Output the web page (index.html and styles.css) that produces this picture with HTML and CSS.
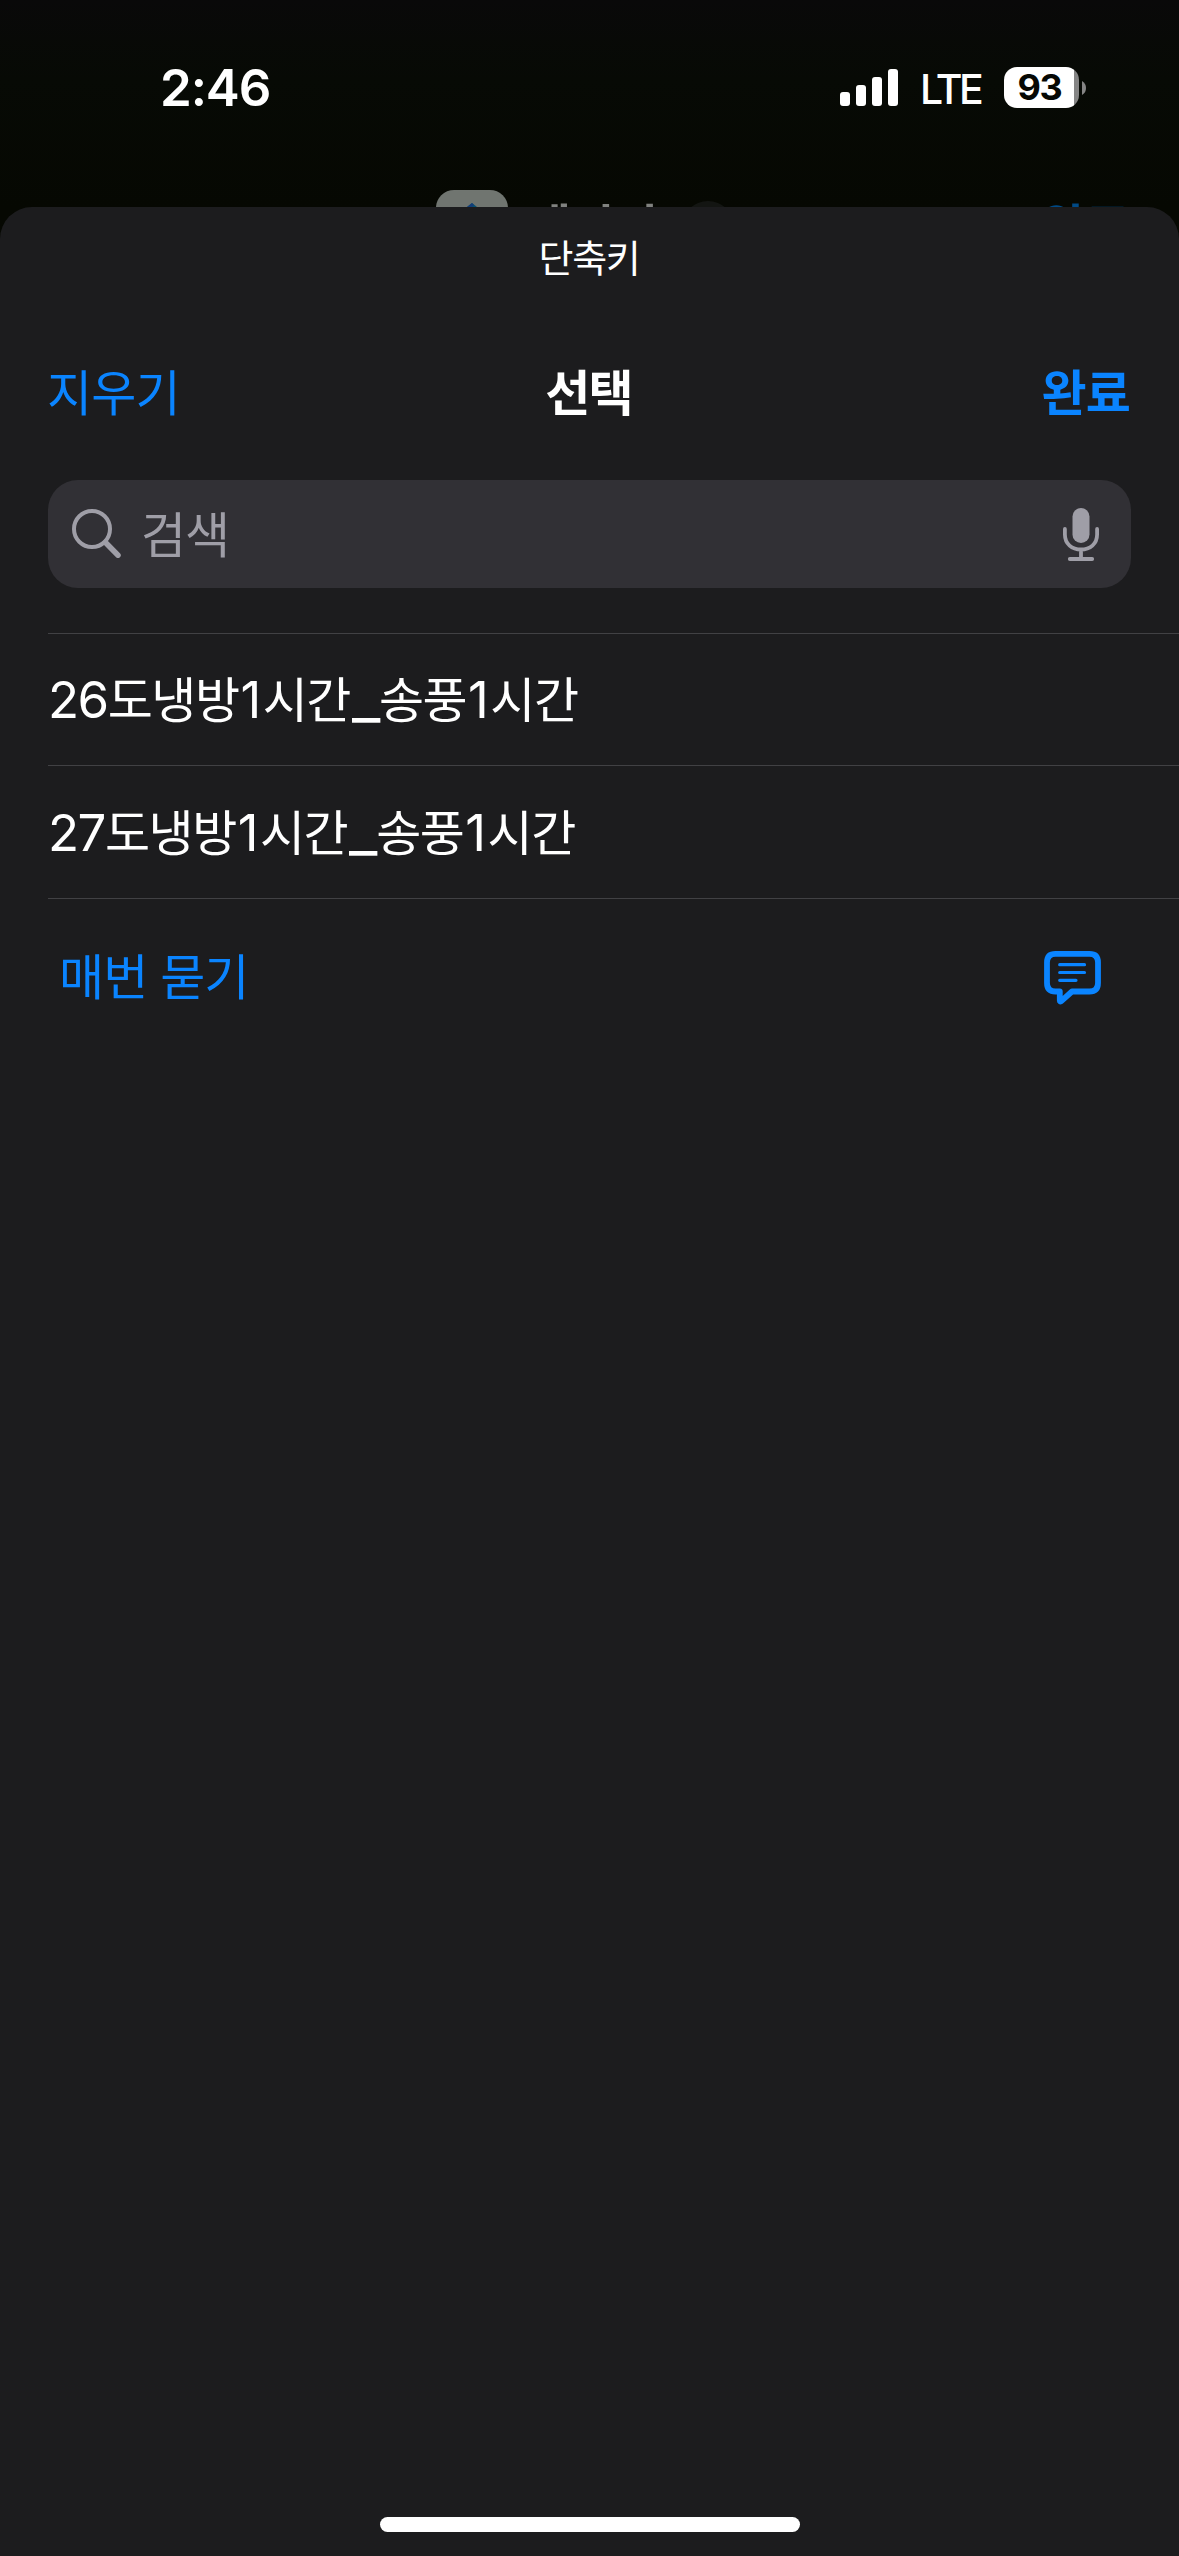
FILE: index.html
```html
<!DOCTYPE html>
<html lang="ko">
<head>
<meta charset="utf-8">
<title>단축키</title>
<link rel="stylesheet" href="styles.css">
</head>
<body>
<div class="screen">
  <header class="status">
    <time class="clock">2:46</time>
    <div class="indicators">
      <svg class="signal" width="58" height="38" viewBox="0 0 58 38" fill="#fff">
        <rect x="0" y="23" width="10" height="14" rx="3"/>
        <rect x="16" y="16" width="10" height="21" rx="3"/>
        <rect x="32" y="8" width="10" height="29" rx="3"/>
        <rect x="48" y="0" width="10" height="37" rx="3"/>
      </svg>
      <span class="network">LTE</span>
      <div class="battery">
        <div class="battery-body">93</div>
        <svg width="4" height="14" viewBox="0 0 4 14"><path d="M0 0C3 2 4 4 4 7S3 12 0 14Z" fill="#858585"/></svg>
      </div>
    </div>
  </header>
  <div class="backdrop">
    <div class="backdrop-icon"><svg width="20" height="20" viewBox="0 0 20 20"><path d="M10 0L20 8V20H0V8Z" fill="#08506f"/><path d="M10 0L0 8H7L12 2Z" fill="#123c78"/></svg></div>
    <span class="backdrop-title">메시지</span>
    <span class="backdrop-dot"></span>
    <span class="backdrop-done">완료</span>
  </div>
  <main class="sheet">
    <p class="prompt">단축키</p>
    <nav class="bar">
      <a class="clear">지우기</a>
      <h1 class="title">선택</h1>
      <a class="done">완료</a>
    </nav>
    <div class="search">
      <svg class="glass" width="50" height="50" viewBox="0 0 50 50" fill="none" stroke="#9f9ea7" stroke-linecap="round">
        <circle cx="20" cy="20" r="18" stroke-width="4"/>
        <path d="M33.500 33.500L46 46.200" stroke-width="5.500"/>
      </svg>
      <span class="placeholder">검색</span>
      <svg class="mic" width="36" height="54" viewBox="0 0 36 54" fill="none" stroke="#9f9ea7" stroke-width="3.800" stroke-linecap="round">
        <rect x="9.500" y="1" width="17" height="35" rx="8.500" fill="#9f9ea7" stroke="none"/>
        <path d="M1.900 22V27.500C1.900 37 9 42.500 18 42.500S34.100 37 34.100 27.500V22M18 42.500V51M6.800 52H29.200"/>
      </svg>
    </div>
    <ul class="list">
      <li class="row"><span class="num">26</span>도냉방<span class="num one">1</span>시간<span class="num underscore">_</span>송풍<span class="num one">1</span>시간</li>
      <li class="row"><span class="num">27</span>도냉방<span class="num one">1</span>시간<span class="num underscore">_</span>송풍<span class="num one">1</span>시간</li>
    </ul>
    <div class="ask">
      <span class="ask-label">매번 묻기</span>
      <svg width="58" height="54" viewBox="0 0 58 54" fill="none" stroke="#0a84ff" stroke-linecap="round" stroke-linejoin="round">
        <path d="M11.500 2.900H45.500Q54 2.900 54 11.400V32Q54 40.500 45.500 40.500H28L17 50.300Q15.800 51 15.800 49.500V40.500H11.500Q3 40.500 3 32V11.400Q3 2.900 11.500 2.900Z" stroke-width="5.800"/>
        <path d="M15.700 13.700H40.500M15.700 21.500H40.500M15.700 29.300H32" stroke-width="3.200"/>
      </svg>
    </div>
    <div class="home"></div>
  </main>
</div>
</body>
</html>
```
FILE: styles.css
```css
* { box-sizing: border-box; margin: 0; padding: 0; }
body { background: #060804; font-family: Inter, "Noto Sans CJK KR", sans-serif; color: #fff; }
.screen { width: 1179px; height: 2556px; display: flex; flex-direction: column; overflow: hidden; background: linear-gradient(#090909 0, #070a05 80px, #060802 207px); }
.status { height: 190px; flex: none; display: flex; justify-content: space-between; padding: 0 93px 0 160px; }
.clock { font-size: 51px; font-weight: 600; line-height: 62px; margin-top: 57px; letter-spacing: -1.1px; }
.indicators { display: flex; align-items: flex-start; }
.signal { margin-top: 69px; }
.network { font-size: 41px; font-weight: 500; line-height: 50px; margin: 64px 0 0 22px; width: 84px; letter-spacing: -3.5px; }
.battery { display: flex; align-items: center; gap: 3px; height: 41px; margin-top: 67px; }
.battery-body { width: 75px; height: 41px; padding-right: 4px; border-radius: 13px; background: linear-gradient(90deg, #fff 70px, #858585 70px); color: #060804; font-size: 36px; font-weight: 700; line-height: 41px; text-align: center; letter-spacing: -1.2px; }
.backdrop { height: 17px; flex: none; display: flex; overflow: hidden; padding: 0 48px 0 436px; }
.backdrop-icon { width: 72px; height: 72px; flex: none; border-radius: 18px; background: #707570; display: flex; justify-content: center; padding-top: 13px; }
.backdrop-title { width: 146px; margin-left: 18px; font: 700 49px/68px "Noto Sans CJK KR", sans-serif; color: #80827f; letter-spacing: -1.5px; white-space: nowrap; }
.backdrop-dot { width: 52px; height: 52px; flex: none; border-radius: 26px; background: #131512; margin: 11px 0 0 10px; }
.backdrop-done { margin-left: auto; font: 700 49px/68px "Noto Sans CJK KR", sans-serif; color: #004a86; letter-spacing: -1px; margin-right: 2px; white-space: nowrap; }
.sheet { flex: 1; display: flex; flex-direction: column; background: #1c1c1e; border-radius: 32px 32px 0 0; }
.prompt { height: 104px; padding-right: 1px; text-align: center; font: 400 38px/98px "Noto Sans CJK KR", sans-serif; letter-spacing: -1.3px; }
.bar { height: 169px; display: grid; grid-template-columns: 1fr 1fr 1fr; padding: 0 49px 0 47px; font: 400 49px/157px "Noto Sans CJK KR", sans-serif; }
.clear, .done { color: #0a84ff; letter-spacing: -0.8px; }
.title { font-size: 49px; font-weight: 700; text-align: center; letter-spacing: -1.8px; }
.done { font-weight: 700; text-align: right; }
.search { height: 108px; margin: 0 48px; border-radius: 30px; background: #313035; color: #9f9ea7; display: flex; align-items: center; padding: 0 32px 0 24px; }
.placeholder { flex: 1; margin-left: 19px; font: 400 49px/108px "Noto Sans CJK KR", sans-serif; height: 113px; letter-spacing: -1px; }
.list { list-style: none; margin: 45px 0 0 48px; border-top: 1px solid #414144; }
.row { height: 132px; display: flex; border-bottom: 1px solid #414144; font: 400 49px/126px "Noto Sans CJK KR", sans-serif; letter-spacing: -1.5px; }
.row + .row { height: 133px; padding-top: 1px; }
.num { font-family: Inter, sans-serif; font-size: 51px; line-height: 131px; }
.one { margin: 0 3px 0 2px; }
.underscore { width: 29px; font-weight: 500; transform: translateX(2px) scaleX(1.2); transform-origin: left; }
.ask { display: flex; justify-content: space-between; align-items: center; height: 158px; padding: 0 77px 0 59px; color: #0a84ff; font: 400 49px/156px "Noto Sans CJK KR", sans-serif; letter-spacing: -0.9px; }
.ask-label { height: 164px; }
.home { width: 420px; height: 15px; margin: auto auto 24px; border-radius: 8px; background: #fff; }
```
